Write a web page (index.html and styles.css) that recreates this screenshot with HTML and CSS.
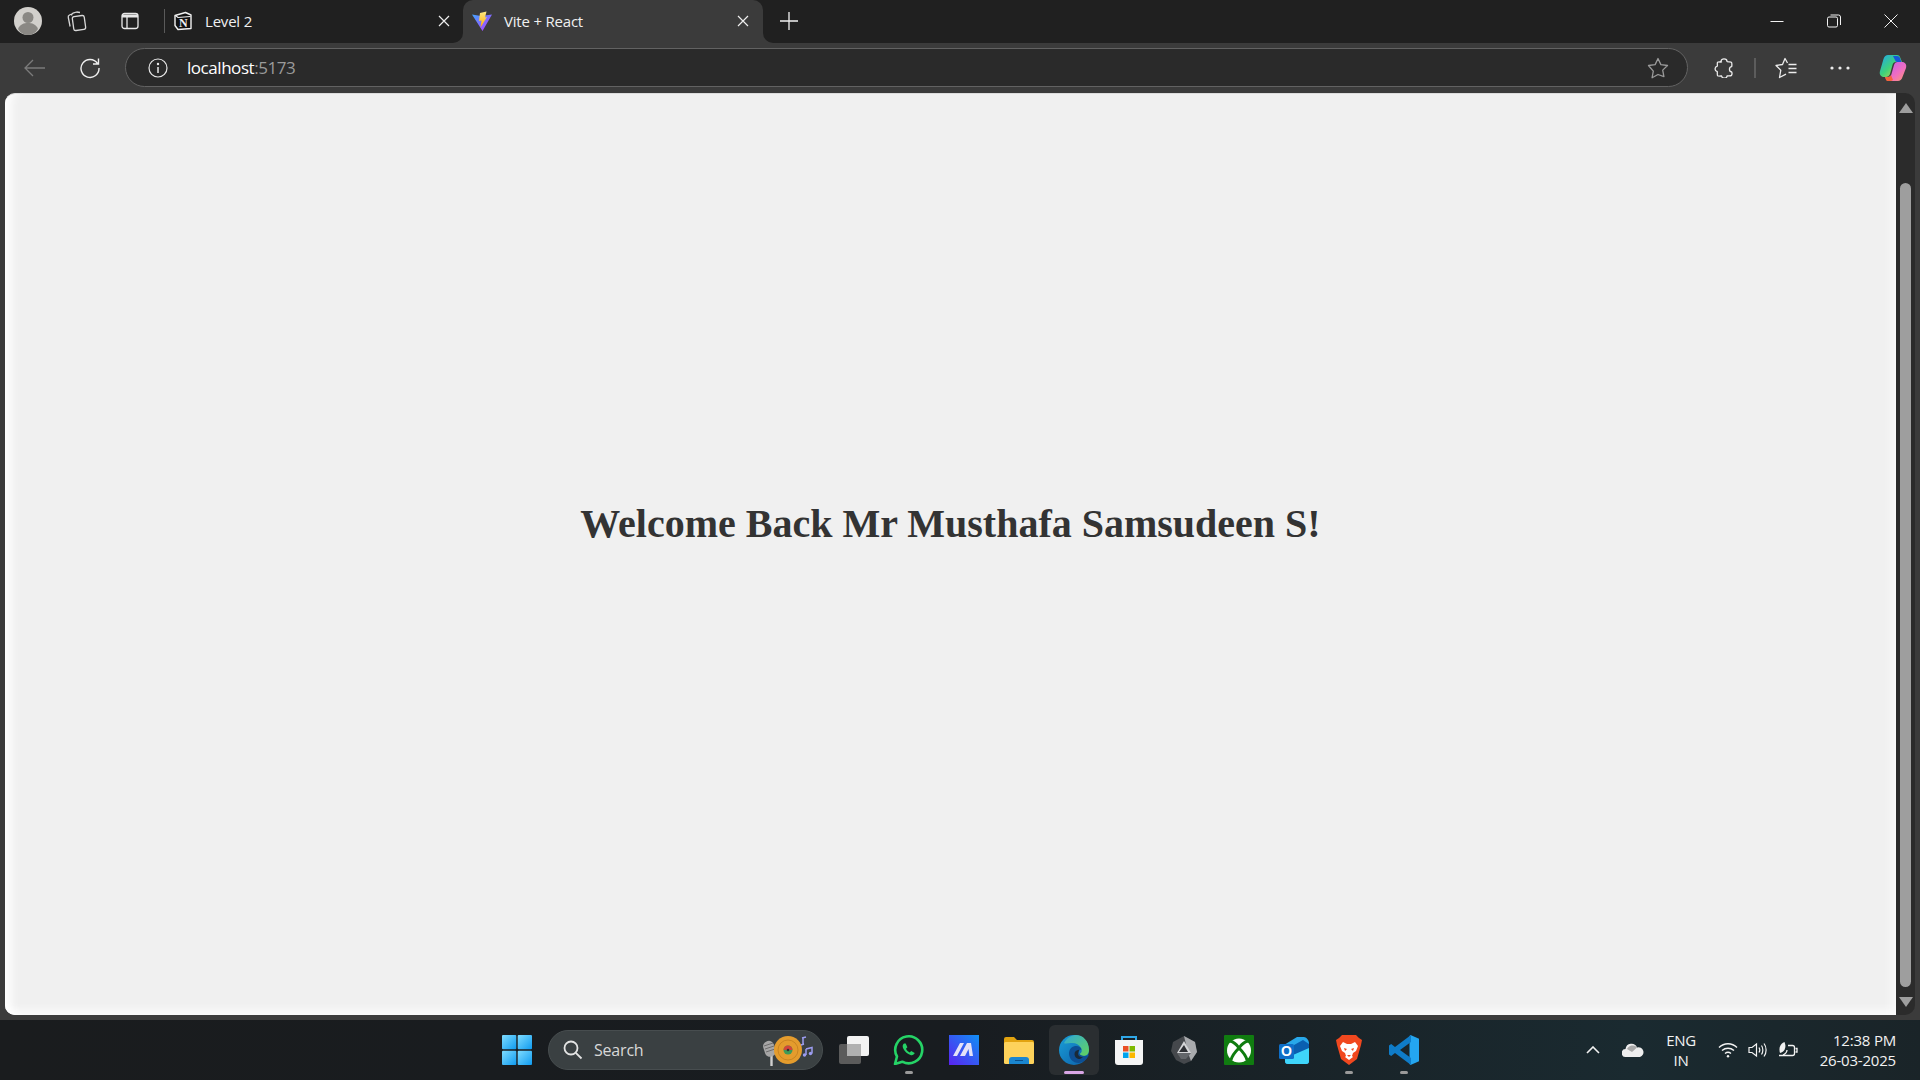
FILE: index.html
```html
<!DOCTYPE html>
<html>
<head>
	<meta charset="utf-8">
	<title>Vite + React</title>
	<link rel="stylesheet" href="styles.css">
</head>
<body>
	<!-- Title bar with tabs -->
	<header class="titlebar">
		<div class="tabs-left">
			<svg class="avatar" width="28" height="28" viewBox="0 0 28 28">
				<circle cx="14" cy="14" r="14" fill="#d2d0cc"/>
				<circle cx="14" cy="10.5" r="5.5" fill="#8a8884"/>
				<path d="M4 22c2-5 6-6 10-6s8 1 10 6c-2.500 4-6 6-10 6s-7.500-2-10-6z" fill="#8a8884"/>
			</svg>
			<svg class="tool-workspaces" width="22" height="22" viewBox="0 0 22 22" fill="none" stroke="#d8d8d8" stroke-width="1.300">
				<rect x="8" y="6" width="12" height="14" rx="2" transform="rotate(-8 14 13)"/>
				<path d="M8 3.500 4.500 5c-1 .5-1.500 1.500-1.200 2.500l1.800 9M11.500 2 8 3.200c-1 .4-1.500 1.300-1.300 2.300M15 2.500l-3.500-.5"/>
			</svg>
			<svg class="tool-vtabs" width="18" height="18" viewBox="0 0 18 18" fill="none" stroke="#e8e8e8" stroke-width="1.300">
				<rect x="1" y="1.500" width="16" height="15" rx="2.500"/>
				<path d="M1 4h16" stroke-width="3"/>
				<path d="M6 5v11"/>
			</svg>
			<span class="tab-sep"></span>
			<div class="tab">
				<svg width="20" height="20" viewBox="0 0 20 20">
					<path d="M2 4.500 12.500 1.500 18 4v13.500L5 18.500 2 14.500z" fill="#111" stroke="#f2f2f2" stroke-width="1.400" stroke-linejoin="round"/>
					<path d="M2.500 4.500 5 6.500 17.500 5.500" fill="none" stroke="#f2f2f2" stroke-width="1.200"/>
					<text x="6" y="16" class="notion-n">N</text>
				</svg>
				<span class="tab-title">Level 2</span>
				<svg class="tab-close" width="12" height="12" viewBox="0 0 12 12" stroke="#eee" stroke-width="1.200"><path d="M1 1l10 10M11 1 1 11"/></svg>
			</div>
		</div>
		<div class="tab tab-active">
			<svg width="20" height="20" viewBox="0 0 20 20">
				<defs>
					<linearGradient id="viteBody" x1="0" y1="0" x2="1" y2="1">
						<stop offset="0" stop-color="#41a6ff"/>
						<stop offset="1" stop-color="#bd34fe"/>
					</linearGradient>
					<linearGradient id="viteBolt" x1="0" y1="0" x2="0" y2="1">
						<stop offset="0" stop-color="#ffea83"/>
						<stop offset="1" stop-color="#ffa800"/>
					</linearGradient>
				</defs>
				<path d="M0 3.500 9 5 20 3.500 10.500 20z" fill="url(#viteBody)"/>
				<path d="M8 2 14.500 .5 13 6.500 15 6 8.500 16.500 9.500 9.500 7 10z" fill="url(#viteBolt)"/>
			</svg>
			<span class="tab-title">Vite + React</span>
			<svg class="tab-close" width="12" height="12" viewBox="0 0 12 12" stroke="#eee" stroke-width="1.200"><path d="M1 1l10 10M11 1 1 11"/></svg>
		</div>
		<div class="tabs-right">
			<svg class="new-tab" width="18" height="18" viewBox="0 0 18 18" stroke="#f2f2f2" stroke-width="1.300"><path d="M9 0v18M0 9h18"/></svg>
			<div class="win-controls">
				<svg width="14" height="14" viewBox="0 0 14 14" stroke="#f2f2f2" stroke-width="1"><path d="M.500 7.500h13"/></svg>
				<svg width="14" height="14" viewBox="0 0 14 14" fill="none" stroke="#f2f2f2" stroke-width="1"><rect x=".500" y="3" width="10" height="10" rx="1.500"/><path d="M3.500 1h8a2 2 0 0 1 2 2v8"/></svg>
				<svg width="14" height="14" viewBox="0 0 14 14" stroke="#f2f2f2" stroke-width="1"><path d="M.500 .500l13 13M13.500 .500l-13 13"/></svg>
			</div>
		</div>
	</header>

	<!-- Toolbar -->
	<nav class="toolbar">
		<svg class="back" width="22" height="18" viewBox="0 0 22 18" fill="none" stroke="#7b7b7b" stroke-width="1.300"><path d="M21 9H1M9 1 1 9l8 8"/></svg>
		<svg class="reload" width="22" height="22" viewBox="0 0 22 22" fill="none" stroke="#efefef" stroke-width="1.400"><path d="M18.500 6.500A9 9 0 1 0 20 11M19.500 1.500v5.500H14"/></svg>
		<div class="address">
			<svg width="20" height="20" viewBox="0 0 20 20" fill="none" stroke="#e8e8e8" stroke-width="1.200"><circle cx="10" cy="10" r="9"/><path d="M10 9v6" stroke-width="1.500"/><circle cx="10" cy="6" r=".6" fill="#e8e8e8"/></svg>
			<span class="url">localhost<span class="url-port">:5173</span></span>
			<svg class="star" width="22" height="22" viewBox="0 0 22 22" fill="none" stroke="#9a9a9a" stroke-width="1.300" stroke-linejoin="round"><path d="M11 1.500l2.900 6.100 6.600.9-4.800 4.600 1.200 6.600L11 17.500l-5.900 3.200 1.200-6.600L1.500 8.500l6.600-.9z"/></svg>
		</div>
		<svg class="ext" width="20" height="20" viewBox="0 0 20 20" fill="none" stroke="#ececec" stroke-width="1.300" stroke-linejoin="round"><path d="M7 3.500c0-3.500 6-3.500 6 0 0 .6 4 .2 4.500 .8.600.7.300 4 .200 4.300-3 .2-3 5 0 5.400.2.500.2 2.800-.3 3.500-.5.700-3.500.3-4.300.5-.4 3-5 3-5.500 0-1 0-3.400.2-4-.3-.5-.5-.2-3-.3-4-3-1-3-4.700 0-5.500.2-1-.3-3.400.3-4 .6-.6 3.400 0 3.900-.2z"/></svg>
		<span class="tool-sep"></span>
		<svg class="favs" width="22" height="22" viewBox="0 0 22 22" fill="none" stroke="#ececec" stroke-width="1.300" stroke-linejoin="round"><path d="M12.500 6 10 1.500 7.500 7.500 1 8.500l4.800 4.700L4.500 20.500l6.500-3.300"/><path d="M13.500 7.500h8M13.500 11.500h8M13.500 15.500h8"/></svg>
		<svg class="dots" width="20" height="4" viewBox="0 0 20 4" fill="#ececec"><circle cx="2" cy="2" r="1.600"/><circle cx="10" cy="2" r="1.600"/><circle cx="18" cy="2" r="1.600"/></svg>
		<svg class="copilot" width="28" height="28" viewBox="0 0 28 28">
			<defs>
				<linearGradient id="copA" x1="0" y1="0" x2="1" y2="1">
					<stop offset="0" stop-color="#1fa5f0"/>
					<stop offset=".5" stop-color="#3fd27a"/>
					<stop offset="1" stop-color="#f7d23a"/>
				</linearGradient>
				<linearGradient id="copB" x1="0" y1="0" x2="1" y2="1">
					<stop offset="0" stop-color="#b85cf0"/>
					<stop offset=".6" stop-color="#f06ec0"/>
					<stop offset="1" stop-color="#ff9a6a"/>
				</linearGradient>
			</defs>
			<path d="M9 1h9c1.500 0 2.500.8 3 2l2 5H17c-2 0-3 1-3.500 3L11 20c-.6 2-2.500 3-4 3H5c-3 0-5-2.500-4-6L4.500 5C5.300 2.500 7 1 9 1z" fill="url(#copA)"/>
			<path d="M19 27h-9c-1.500 0-2.500-.8-3-2l-1-2h3c2 0 3-1 3.500-3L15 11c.6-2 2-3 3.500-3H23c3 0 5 2.500 4 6l-3.500 9c-.8 2.500-2.500 4-4.500 4z" fill="url(#copB)"/>
			<path d="M14 2h4c1.500 0 2.500.8 3 2l1.500 4H18c-1 0-1.500-1-2-2z" fill="#1657d8"/>
			<path d="M7 26l-1-3h3c1.500 0 2.500-1 3-2l2 5c-1 1-3 1-4 1-1.500 0-2.500 0-3-1z" fill="#f4633c"/>
		</svg>
	</nav>

	<!-- Page and browser scrollbar -->
	<div class="viewport">
		<main class="page">
			<h1>Welcome Back Mr Musthafa Samsudeen S!</h1>
		</main>
		<div class="scrollbar">
			<span class="arrow-up"></span>
			<span class="thumb"></span>
			<span class="arrow-down"></span>
		</div>
	</div>

	<!-- Windows taskbar -->
	<footer class="taskbar">
		<svg class="start" width="30" height="30" viewBox="0 0 30 30">
			<defs>
				<linearGradient id="winBlue" x1="0" y1="0" x2="1" y2="1">
					<stop offset="0" stop-color="#7fdcff"/>
					<stop offset="1" stop-color="#0f9bf0"/>
				</linearGradient>
			</defs>
			<rect x="0" y="0" width="14.300" height="14.300" rx="1" fill="url(#winBlue)"/>
			<rect x="15.700" y="0" width="14.300" height="14.300" rx="1" fill="url(#winBlue)"/>
			<rect x="0" y="15.700" width="14.300" height="14.300" rx="1" fill="url(#winBlue)"/>
			<rect x="15.700" y="15.700" width="14.300" height="14.300" rx="1" fill="url(#winBlue)"/>
		</svg>
		<div class="search">
			<svg width="20" height="20" viewBox="0 0 20 20" fill="none" stroke="#e4e4e4" stroke-width="1.800"><circle cx="8" cy="8" r="6.500"/><path d="M12.800 12.800 18.500 18.500"/></svg>
			<span class="search-label">Search</span>
			<svg class="search-art" width="56" height="34" viewBox="0 0 56 34">
				<path d="M12.500 20v13" stroke="#d0d0d0" stroke-width="2.400"/>
				<rect x="5" y="8" width="11" height="16" rx="5" fill="#a6a6a6" transform="rotate(-18 10 16)"/>
				<path d="M5 13l9-3M6 16l9-3M7 19l9-3" stroke="#6c6c6c" stroke-width="1"/>
				<circle cx="29" cy="17" r="14" fill="#e49c2d"/>
				<circle cx="29" cy="17" r="10" fill="none" stroke="#c98522" stroke-width="1"/>
				<circle cx="29" cy="17" r="4.500" fill="#3e9a58"/>
				<path d="M24.500 17a4.500 4.500 0 0 1 9 0z" fill="#d2453a"/>
				<circle cx="29" cy="17" r="1.300" fill="#333"/>
				<path d="M43 5l4-1M44 5v6M42 12l3-1M47 16l6-1.500v6M47 16v6" fill="none" stroke="#9c9cf0" stroke-width="1.500"/>
				<circle cx="45.500" cy="22" r="1.700" fill="#9c9cf0"/>
				<circle cx="51.500" cy="20.500" r="1.700" fill="#9c9cf0"/>
			</svg>
		</div>
		<div class="apps">
			<div class="app">
				<svg width="30" height="28" viewBox="0 0 30 28"><rect x="0" y="8" width="22" height="20" rx="2" fill="#5b5b5b"/><rect x="8" y="0" width="22" height="20" rx="2" fill="#f2f2f2"/><rect x="8" y="8" width="14" height="12" fill="#b0b0b0"/></svg>
			</div>
			<div class="app has-dot">
				<svg width="32" height="30" viewBox="0 0 32 30" fill="none"><path d="M2 29l2-7.500a13.500 13.500 0 1 1 5.300 5.200z" stroke="#25d366" stroke-width="2.600" stroke-linejoin="round"/><path d="M11 8.500c-1.500 1-1.800 3-.5 5.500 1.500 3 4 5 7 6 2 .6 3.500-.3 4.200-2l-3.500-2-1.500 1.500c-1.500-.7-3-2.300-3.700-3.800l1.400-1.500-1.700-3.700z" fill="#25d366"/></svg>
			</div>
			<div class="app">
				<svg width="30" height="30" viewBox="0 0 30 30">
					<defs><linearGradient id="mBg" x1="0" y1="1" x2="1" y2="0"><stop offset="0" stop-color="#5a22f0"/><stop offset="1" stop-color="#1090f5"/></linearGradient></defs>
					<rect width="30" height="30" fill="url(#mBg)"/>
					<path d="M4 21 11 8h4L8 21zM11 21l7-13h4l2 13h-3.500l-1-7-3.500 7z" fill="#e4e2f8"/>
				</svg>
			</div>
			<div class="app">
				<svg width="30" height="27" viewBox="0 0 30 27"><path d="M0 2a2 2 0 0 1 2-2h8l3 3h15a2 2 0 0 1 2 2v3H0z" fill="#e2a30f"/><rect y="5" width="30" height="22" rx="1.500" fill="#fdd25b"/><path d="M5 27v-4a3 3 0 0 1 3-3h14a3 3 0 0 1 3 3v4z" fill="#1a86d0"/><path d="M11 23.500h8" stroke="#0b4f8a" stroke-width="1"/></svg>
			</div>
			<div class="app app-active">
				<svg width="30" height="30" viewBox="0 0 30 30">
					<defs>
						<linearGradient id="edgeA" x1="0" y1="0" x2="1" y2="1"><stop offset="0" stop-color="#1a9ed8"/><stop offset="1" stop-color="#0c5fa8"/></linearGradient>
						<linearGradient id="edgeB" x1="0" y1="0" x2="1" y2="1"><stop offset="0" stop-color="#2fa8d8"/><stop offset="1" stop-color="#63d45c"/></linearGradient>
					</defs>
					<circle cx="15" cy="15" r="15" fill="url(#edgeA)"/>
					<path d="M5 8C8 2 14 0 17 0c7 0 13 6 13 15 0 3-2 6-5.500 6-3 0-4-1-4-2 2-1 3-3 1.500-6C20 9 16 7.500 12 8c-3 .3-6 1-7 0z" fill="url(#edgeB)"/>
					<path d="M30 20c-4 2-9 1-10-2-.5-2 1-3.500 2.500-3.500C22 12 19 10.500 16 11c-4 .7-6 4-6 7.500 0 5 4 9.500 9.500 9.500 4.500-.5 8.500-3.500 10.500-8z" fill="#0d4f94"/>
					<path d="M15.500 19c0-2.500 2-4 4.500-4.200 0 1.500-1 2.500-1 4 0 2 2 3.500 5 3.500l-3 1.700c-3 0-5.500-2-5.500-5z" fill="#1a2a38"/>
				</svg>
			</div>
			<div class="app">
				<svg width="30" height="30" viewBox="0 0 30 30"><path d="M8 6V2h14v4" fill="none" stroke="#2fa8e8" stroke-width="2"/><path d="M1 5h28v22a3 3 0 0 1-3 3H4a3 3 0 0 1-3-3z" fill="#f5f5f5"/><rect x="9" y="11" width="5.500" height="5.500" fill="#ea4f25"/><rect x="15.500" y="11" width="5.500" height="5.500" fill="#7eb900"/><rect x="9" y="17.500" width="5.500" height="5.500" fill="#00a3ee"/><rect x="15.500" y="17.500" width="5.500" height="5.500" fill="#fcb800"/></svg>
			</div>
			<div class="app">
				<svg width="26" height="28" viewBox="0 0 26 28"><path d="M13 0l11 6 2 10-6 9-7 3-8-4-5-9 2-9z" fill="#45484c"/><path d="M13 0l11 6 2 10-6 9-3-8z" fill="#a8aaad"/><path d="M13 5 20 17H6z" fill="#d4d5d7"/><path d="M13 9 17 16H8z" fill="#2e3034"/><path d="M6 17h14l-5 6H10z" fill="#63666a"/></svg>
			</div>
			<div class="app">
				<svg width="30" height="30" viewBox="0 0 30 30"><rect width="30" height="30" rx="1" fill="#107c10"/><circle cx="15" cy="15.500" r="12" fill="#fff"/><path d="M6 6C10 7 13 10 15 13 17 10 20 7 24 6M15 13C11 17 8 21 7 25M15 13C19 17 22 21 23 25" fill="none" stroke="#107c10" stroke-width="3"/></svg>
			</div>
			<div class="app">
				<svg width="30" height="27" viewBox="0 0 30 27"><path d="M5 8 18 0h7c2 0 5 3 5 6v18a3 3 0 0 1-3 3H9a3 3 0 0 1-3-3z" fill="#28a8ea"/><path d="M15 8 24 3l6 4v5l-15 6z" fill="#0a5fb0"/><path d="M14 18 30 11v13a3 3 0 0 1-3 3H9a3 3 0 0 1-3-3v-2z" fill="#3fd5fa"/><rect x="0" y="7" width="15" height="15" rx="1.500" fill="#0f6fc8"/><text x="7.500" y="19" class="outlook-o">O</text></svg>
			</div>
			<div class="app has-dot">
				<svg width="26" height="30" viewBox="0 0 26 30"><path d="M6 0h14l3 3 3 2-1 5-4 14-8 6-8-6L1 10 0 5l3-2z" fill="#f1481f"/><path d="M7 7l4 2h4l4-2 3 4-2 5-3 2-1 3 1 1-4 3-4-3 1-1-1-3-3-2-2-5z" fill="#fff"/><path d="M8 13l3 1-2 2zM18 13l-3 1 2 2zM11 20h4l-2 2z" fill="#f1481f"/></svg>
			</div>
			<div class="app has-dot">
				<svg width="30" height="30" viewBox="0 0 30 30"><path d="M21.500 0 30 3.800v22.400L21.500 30l-1-1V1z" fill="#24a6f0"/><path d="M22 7 11 15l11 8v7L6 18 2.200 21 0 19.500V10.500L2.200 9 6 12 22 0z" fill="#0f7cc8"/></svg>
			</div>
		</div>
		<div class="tray">
			<svg class="tray-chevron" width="14" height="8" viewBox="0 0 14 8" fill="none" stroke="#f2f2f2" stroke-width="1.600"><path d="M1 7l6-6 6 6"/></svg>
			<svg class="tray-cloud" width="22" height="14" viewBox="0 0 22 14"><path d="M4 14a4 4 0 0 1-.5-8A6 6 0 0 1 15 4.500 4.500 4.500 0 0 1 18 14z" fill="#eee"/><path d="M5 6a6 6 0 0 1 10-1.500L10 9z" fill="#a9a9a9"/></svg>
			<div class="lang"><span>ENG</span><span>IN</span></div>
			<svg class="tray-wifi" width="20" height="16" viewBox="0 0 20 16" fill="none" stroke="#f2f2f2" stroke-width="1.400"><path d="M1 5.500c5-5 13-5 18 0M4 8.500c3.500-3 8.500-3 12 0M7 11.500c1.800-1.400 4.200-1.400 6 0"/><circle cx="10" cy="14.300" r="1.200" fill="#f2f2f2" stroke="none"/></svg>
			<svg class="tray-vol" width="20" height="16" viewBox="0 0 20 16" fill="none" stroke="#f2f2f2" stroke-width="1.200"><path d="M1 5.500h3L8.500 2v12L4 10.500H1zM11 5.500c1 1.500 1 3.500 0 5M13.500 3.500c1.800 2.500 1.800 6.500 0 9M16 1.500c2.800 3.700 2.800 9.300 0 13"/></svg>
			<svg class="tray-batt" width="20" height="16" viewBox="0 0 20 16" fill="none" stroke="#f2f2f2" stroke-width="1.300"><path d="M10 3.500h4.500a2 2 0 0 1 2 2v6a2 2 0 0 1-2 2H1"/><path d="M17.500 6.500h1.500v3.500h-1.500"/><path d="M6.500 0C2 2 .5 6 2 11c4-1 7-5 4.500-11z" fill="#f2f2f2" stroke="none"/><path d="M5 13c2-1 4-2.500 4-5" /></svg>
			<div class="clock"><span>12:38 PM</span><span>26-03-2025</span></div>
		</div>
	</footer>
</body>
</html>
```

FILE: styles.css
```css
body {
	margin: 0;
	width: 1920px;
	height: 1080px;
	overflow: hidden;
	display: flex;
	flex-direction: column;
	background-color: #3b3b3b;
	font-family: "Open Sans", "Noto Sans", sans-serif;
	color: #f2f2f2;
}

svg {
	display: block;
	flex-shrink: 0;
}

/* title bar */
.titlebar {
	height: 43px;
	display: flex;
	background: linear-gradient(#202020 50%, #3b3b3b 50%);
}

.tabs-left {
	width: 463px;
	box-sizing: border-box;
	padding-bottom: 1px;
	display: flex;
	align-items: center;
	background-color: #202020;
	border-bottom-right-radius: 10px;
}

.avatar {
	margin-left: 14px;
}

.tool-workspaces {
	margin-left: 23px;
}

.tool-vtabs {
	margin-left: 34px;
}

.tab-sep {
	width: 1px;
	height: 24px;
	margin-left: 25px;
	background-color: #5a5a5a;
}

.tab {
	flex: 1;
	display: flex;
	align-items: center;
	padding: 0 13px 0 8px;
}

.tab-title {
	flex: 1;
	margin-left: 12px;
	font-size: 15px;
	letter-spacing: -0.2px;
	color: #f0f0f0;
}

.tab-active {
	flex: none;
	width: 300px;
	box-sizing: border-box;
	padding: 0 14px 1px 9px;
	background-color: #3b3b3b;
	border-radius: 10px 10px 0 0;
}

.tabs-right {
	flex: 1;
	box-sizing: border-box;
	padding-bottom: 1px;
	display: flex;
	align-items: center;
	background-color: #202020;
	border-bottom-left-radius: 10px;
}

.new-tab {
	margin-left: 17px;
}

.win-controls {
	margin-left: auto;
	display: flex;
	gap: 43px;
	padding-right: 22px;
}

.notion-n {
	font-family: "Liberation Serif", serif;
	font-weight: bold;
	font-size: 12px;
	fill: #f2f2f2;
}

/* toolbar */
.toolbar {
	height: 49px;
	padding-bottom: 1px;
	display: flex;
	align-items: center;
	background-color: #3b3b3b;
}

.back {
	margin-left: 24px;
}

.reload {
	margin-left: 33px;
}

.address {
	width: 1563px;
	height: 39px;
	box-sizing: border-box;
	margin-left: 24px;
	display: flex;
	align-items: center;
	padding: 0 18px 0 22px;
	background-color: #2a2a2a;
	border: 1px solid #626262;
	border-radius: 20px;
}

.url {
	margin-left: 19px;
	font-size: 17px;
	letter-spacing: -0.45px;
	color: #fff;
}

.url-port {
	color: #9a9a9a;
}

.star {
	margin-left: auto;
}

.ext {
	margin-left: 26px;
}

.tool-sep {
	width: 2px;
	height: 20px;
	margin-left: 20px;
	background-color: #5c5c5c;
}

.favs {
	margin-left: 19px;
}

.dots {
	margin-left: 33px;
}

.copilot {
	margin-left: 29px;
}

/* page */
.viewport {
	height: 927px;
	display: flex;
	padding: 0 5px 5px;
	box-sizing: border-box;
}

.page {
	flex: 1;
	padding-top: 402px;
	text-align: center;
	background-color: #f0f0f0;
	border-radius: 10px 0 0 10px;
	border-top: 1px solid #dcdcdc;
	box-shadow: inset 12px 0 10px -6px #fff, inset -12px 0 10px -8px #fbfbfb, inset 0 -10px 6px -4px #f9f9f9;
}

h1 {
	margin: 0;
	font-family: "Liberation Serif", serif;
	font-size: 40px;
	font-weight: bold;
	line-height: 56px;
	color: #333;
}

.scrollbar {
	width: 19px;
	display: flex;
	flex-direction: column;
	align-items: center;
	background-color: #2b2b2b;
	border-radius: 0 10px 10px 0;
}

.arrow-up {
	margin-top: 10px;
	border-left: 7px solid transparent;
	border-right: 7px solid transparent;
	border-bottom: 10px solid #9e9e9e;
}

.thumb {
	width: 11px;
	height: 804px;
	margin-top: 70px;
	background-color: #9e9e9e;
	border-radius: 6px;
}

.arrow-down {
	margin-top: 10px;
	border-left: 7px solid transparent;
	border-right: 7px solid transparent;
	border-top: 10px solid #9e9e9e;
}

/* taskbar */
.taskbar {
	height: 60px;
	display: flex;
	align-items: center;
	background: linear-gradient(90deg, #1a1c1e, #181c20 50%, #1a2a30 85%, #1a2428);
}

.start {
	margin-left: 502px;
}

.search {
	width: 275px;
	height: 40px;
	box-sizing: border-box;
	margin-left: 16px;
	display: flex;
	align-items: center;
	padding: 0 7px 0 14px;
	background-color: #3a4042;
	border: 1px solid #474d4f;
	border-radius: 20px;
}

.search-label {
	flex: 1;
	margin-left: 11px;
	font-size: 16px;
	letter-spacing: -0.2px;
	color: #d8d8d8;
}

.apps {
	margin-left: 6px;
	display: flex;
	gap: 5px;
}

.app {
	width: 50px;
	height: 50px;
	box-sizing: border-box;
	display: flex;
	align-items: center;
	justify-content: center;
	position: relative;
	border-radius: 6px;
}

.app-active {
	background-color: #2a2e31;
}

.has-dot::after,
.app-active::after {
	content: "";
	position: absolute;
	bottom: 1px;
	left: 50%;
	width: 8px;
	height: 3px;
	margin-left: -4px;
	background-color: #9a9a9a;
	border-radius: 2px;
}

.app-active::after {
	width: 20px;
	margin-left: -10px;
	background-color: #d9a6e6;
}

.tray {
	margin-left: auto;
	display: flex;
	align-items: center;
	padding-right: 24px;
}

.tray-cloud {
	margin-left: 22px;
}

.lang {
	width: 50px;
	margin-left: 12px;
	display: flex;
	flex-direction: column;
	align-items: center;
	font-size: 15px;
	line-height: 20px;
	letter-spacing: -0.3px;
}

.tray-wifi {
	margin-left: 12px;
}

.tray-vol {
	margin-left: 10px;
}

.tray-batt {
	margin-left: 10px;
}

.clock {
	width: 88px;
	margin-left: 10px;
	display: flex;
	flex-direction: column;
	align-items: flex-end;
	font-size: 15px;
	line-height: 20px;
	letter-spacing: -0.2px;
}

.outlook-o {
	font-family: "Liberation Sans", sans-serif;
	font-size: 14px;
	font-weight: bold;
	text-anchor: middle;
	fill: #fff;
}
```
